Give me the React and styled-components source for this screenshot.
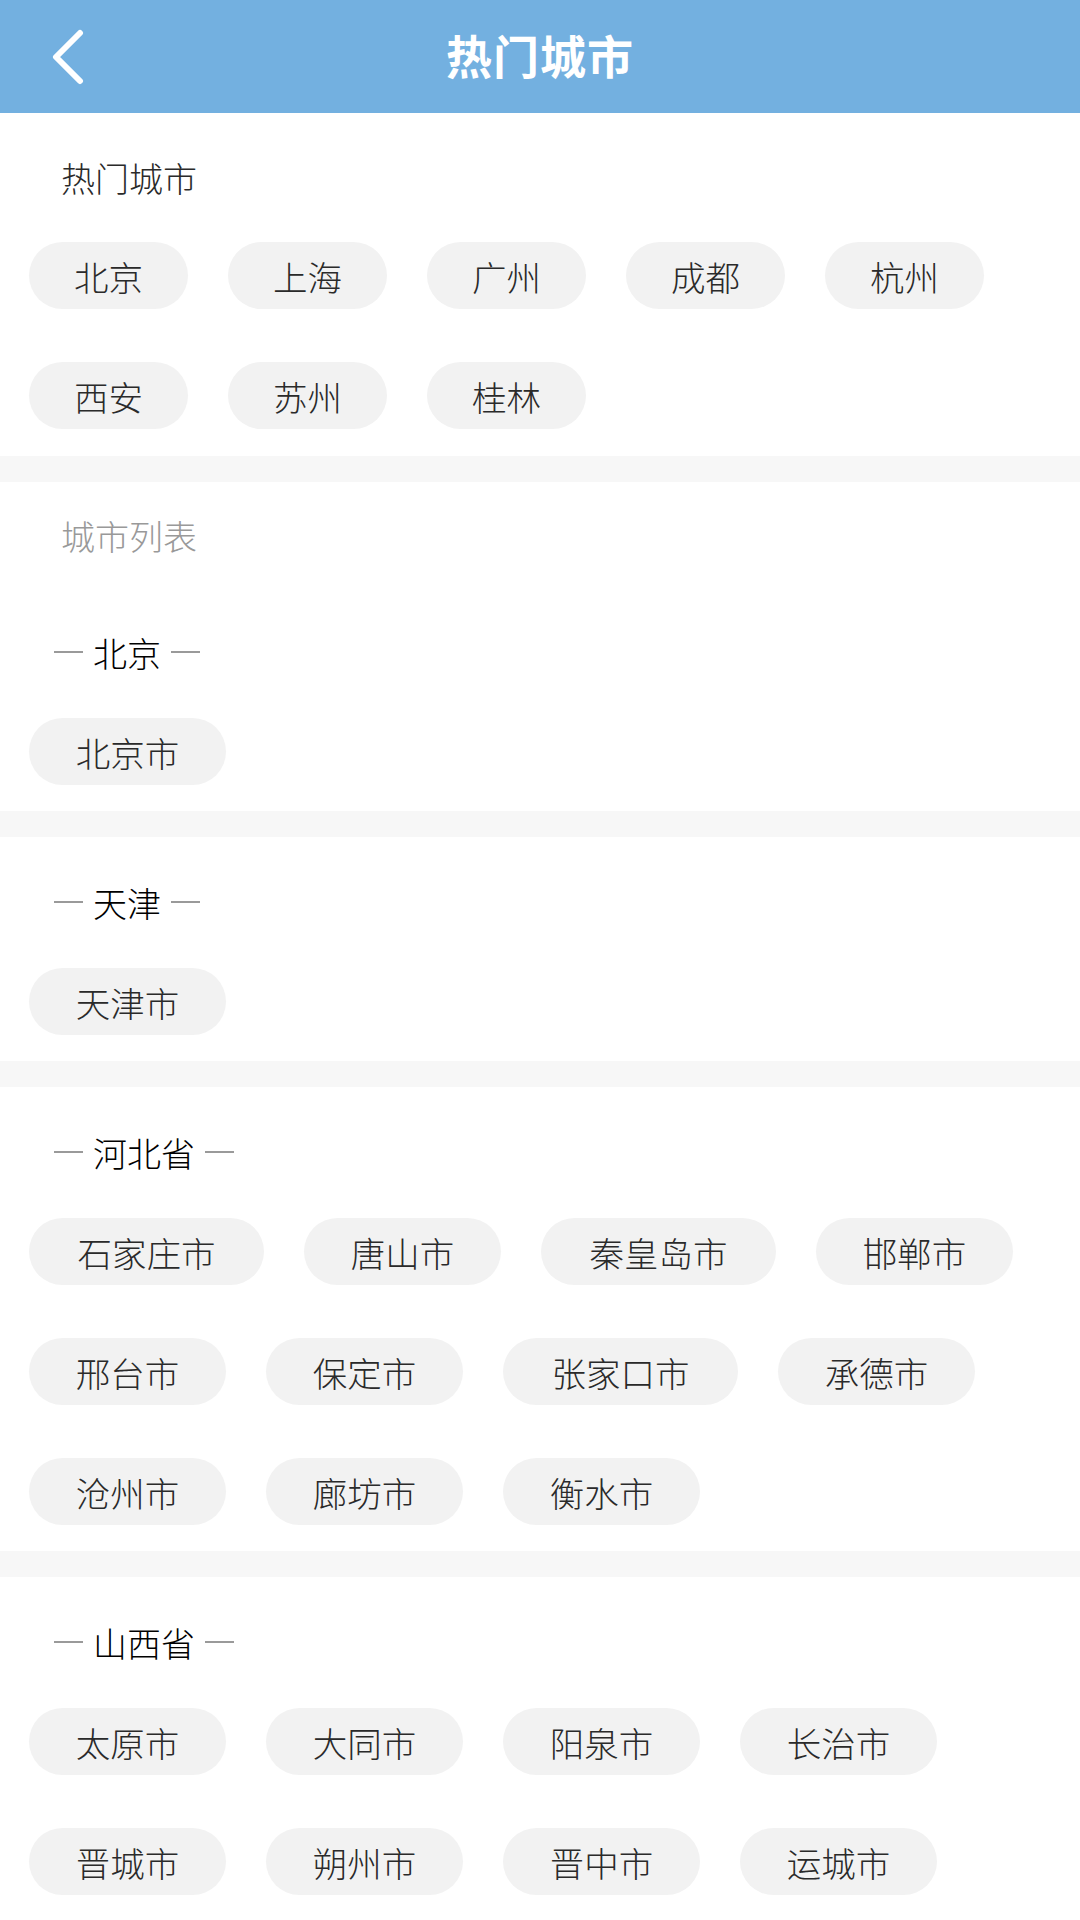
import React from 'react';
import styled, { createGlobalStyle } from 'styled-components';

const GlobalStyle = createGlobalStyle`
  body {
    margin: 0;
    background-color: #ffffff;
    font-family: 'Noto Sans CJK SC', 'Noto Sans', sans-serif;
  }
`;

const Page = styled.div`
  width: 1080px;
  min-height: 1920px;
  background-color: #f7f7f7;
`;

const Header = styled.header`
  height: 113px;
  background-color: #73b0e0;
  display: grid;
  grid-template-columns: 1fr auto 1fr;
  align-items: center;
`;

const BackButton = styled.button`
  justify-self: start;
  margin-left: 42px;
  width: 50px;
  height: 60px;
  padding: 0;
  border: none;
  background: none;
  display: flex;
  align-items: center;
  justify-content: center;
`;

const Title = styled.h1`
  margin: 0 0 6px;
  color: #ffffff;
  font-size: 46px;
  font-weight: 700;
  letter-spacing: 1px;
`;

const Card = styled.section`
  background-color: #ffffff;
  padding: ${(p) => p.$padding || '0'};
`;

const Divider = styled.div`
  height: 26px;
  background-color: #f7f7f7;
`;

const SectionLabel = styled.div`
  height: 40px;
  line-height: 40px;
  padding-left: ${(p) => p.$indent || '32px'};
  font-size: 34px;
  font-weight: 300;
  color: ${(p) => (p.$muted ? '#999999' : '#2a2a2a')};
  margin: ${(p) => p.$margin || '0'};
`;

const ChipGrid = styled.div`
  display: flex;
  flex-wrap: wrap;
  column-gap: 40px;
  row-gap: 53px;
`;

// chip width grows with the number of characters
const Chip = styled.span`
  width: ${(p) => 83 + p.$len * 38}px;
  height: 67px;
  border-radius: 34px;
  background-color: #f2f2f2;
  color: #2a2a2a;
  font-size: 34.5px;
  font-weight: 300;
  display: inline-flex;
  align-items: center;
  justify-content: center;
  white-space: nowrap;
`;

const ProvinceWrap = styled.div`
  padding: 45px 29px 26px;
`;

const ProvinceTitle = styled.div`
  height: 40px;
  display: flex;
  align-items: center;
  gap: 10px;
  padding-left: 25px;
  margin-bottom: 46px;
  font-size: 34px;
  font-weight: 300;
  color: #000000;
`;

const Dash = styled.span`
  width: 29px;
  height: 2px;
  background-color: #9a9a9a;
`;

const hotCities = ['北京', '上海', '广州', '成都', '杭州', '西安', '苏州', '桂林'];

const provinces = [
  { name: '北京', cities: ['北京市'] },
  { name: '天津', cities: ['天津市'] },
  {
    name: '河北省',
    cities: ['石家庄市', '唐山市', '秦皇岛市', '邯郸市', '邢台市', '保定市', '张家口市', '承德市', '沧州市', '廊坊市', '衡水市'],
  },
  {
    name: '山西省',
    cities: ['太原市', '大同市', '阳泉市', '长治市', '晋城市', '朔州市', '晋中市', '运城市'],
  },
];

const Province = ({ name, cities }) => (
  <ProvinceWrap>
    <ProvinceTitle>
      <Dash />
      {name}
      <Dash />
    </ProvinceTitle>
    <ChipGrid>
      {cities.map((c) => (
        <Chip key={c} $len={c.length}>
          {c}
        </Chip>
      ))}
    </ChipGrid>
  </ProvinceWrap>
);

const App = () => {
  const [first, ...rest] = provinces;
  return (
    <>
      <GlobalStyle />
      <Page>
        <Header>
          <BackButton type='button' aria-label='back'>
            <svg width='40' height='56' viewBox='0 0 40 56'>
              <path d='M33 4 L9 28 L33 52' fill='none' stroke='#ffffff' strokeWidth='6' strokeLinecap='round' strokeLinejoin='round' />
            </svg>
          </BackButton>
          <Title>热门城市</Title>
          <span />
        </Header>

        <Card $padding='45px 29px 27px'>
          <SectionLabel $margin='0 0 44px'>热门城市</SectionLabel>
          <ChipGrid>
            {hotCities.map((c) => (
              <Chip key={c} $len={c.length}>
                {c}
              </Chip>
            ))}
          </ChipGrid>
        </Card>
        <Divider />

        <Card $padding='34px 0 0'>
          <SectionLabel $muted $indent='61px' $margin='0 0 31px'>
            城市列表
          </SectionLabel>
          <Province name={first.name} cities={first.cities} />
        </Card>

        {rest.map((p) => (
          <React.Fragment key={p.name}>
            <Divider />
            <Card>
              <Province name={p.name} cities={p.cities} />
            </Card>
          </React.Fragment>
        ))}
      </Page>
    </>
  );
};

export default App;
